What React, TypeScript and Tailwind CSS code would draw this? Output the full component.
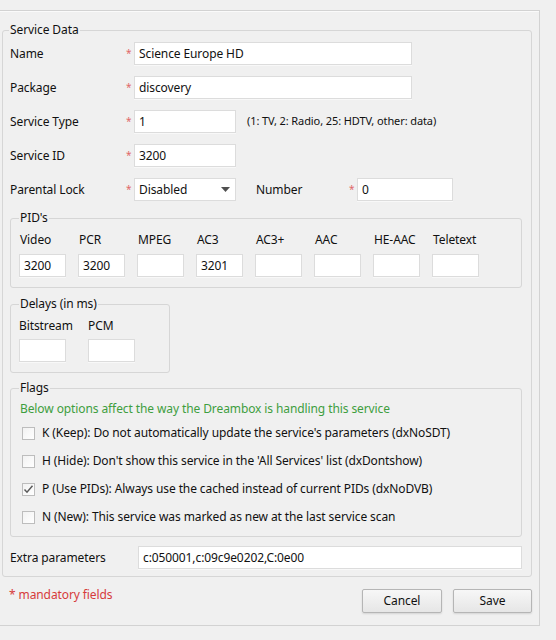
import React from 'react';

// Service editor dialog: service data, PIDs, delays, flags and extra parameters
const pidColumns = [
    { label: 'Video', value: '3200' },
    { label: 'PCR', value: '3200' },
    { label: 'MPEG', value: '' },
    { label: 'AC3', value: '3201' },
    { label: 'AC3+', value: '' },
    { label: 'AAC', value: '' },
    { label: 'HE-AAC', value: '' },
    { label: 'Teletext', value: '' },
];

const flags = [
    { text: "K (Keep): Do not automatically update the service's parameters (dxNoSDT)", checked: false },
    { text: "H (Hide): Don't show this service in the 'All Services' list (dxDontshow)", checked: false },
    { text: 'P (Use PIDs): Always use the cached instead of current PIDs (dxNoDVB)', checked: true },
    { text: 'N (New): This service was marked as new at the last service scan', checked: false },
];

function TextBox({ value = '', className = '' }: { value?: string; className?: string }) {
    return (
        <div
            className={`h-[23px] bg-white border border-[#dcdcdc] shadow-[0_1px_0_#f8f8f8] flex items-center pl-[4px] text-[12px] text-[#111] ${className}`}
        >
            {value}
        </div>
    );
}

function Required() {
    return <span className="w-[8px] shrink-0 text-[10px] text-[#e06868] leading-none -mt-[2px]">*</span>;
}

function GroupBox({
    title,
    className = '',
    children,
}: {
    title: string;
    className?: string;
    children: React.ReactNode;
}) {
    return (
        <fieldset className={`border border-[#d6d6d6] rounded-[3px] p-0 min-w-0 ${className}`}>
            <legend className="ml-[8px] px-[1px] text-[12px] leading-[16px]">{title}</legend>
            {children}
        </fieldset>
    );
}

function Checkbox({ checked }: { checked: boolean }) {
    return (
        <div className="w-[13px] h-[13px] shrink-0 border border-[#bdbdbd] bg-gradient-to-br from-[#f2f2f2] to-white flex items-center justify-center">
            {checked && (
                <svg width="11" height="11" viewBox="0 0 11 11">
                    <path d="M1.5 5.5 L4 8.2 L9.5 1.8" fill="none" stroke="#5a5a5a" strokeWidth="1.5" />
                </svg>
            )}
        </div>
    );
}

export default function App() {
    return (
        <div className="w-[556px] h-[640px] bg-[#f0f0f0] pt-[10px] overflow-hidden font-['Noto_Sans',sans-serif] text-[12px] tracking-[-0.1px] text-[#111]">
            <div className="w-[540px] h-[616px] border-t border-r border-b border-[#d2d2d2] shadow-[inset_0_1px_0_#fafafa] pl-[2px] pt-[11px]">
                {/* Service Data */}
                <fieldset className="w-[530px] border border-[#d6d6d6] rounded-[3px] p-0 min-w-0">
                    <legend className="ml-[6px] px-[1px] text-[12px] leading-[16px]">Service Data</legend>
                    <div className="pt-[4px] pl-[7px] pr-[8px] pb-[7px]">
                        <div className="flex flex-col gap-[11px]">
                            <div className="flex items-center h-[23px]">
                                <span className="w-[116px]">Name</span>
                                <Required />
                                <TextBox value="Science Europe HD" className="w-[278px]" />
                            </div>
                            <div className="flex items-center h-[23px]">
                                <span className="w-[116px]">Package</span>
                                <Required />
                                <TextBox value="discovery" className="w-[278px]" />
                            </div>
                            <div className="flex items-center h-[23px]">
                                <span className="w-[116px]">Service Type</span>
                                <Required />
                                <TextBox value="1" className="w-[102px]" />
                                <span className="ml-[11px] text-[11px]">(1: TV, 2: Radio, 25: HDTV, other: data)</span>
                            </div>
                            <div className="flex items-center h-[23px]">
                                <span className="w-[116px]">Service ID</span>
                                <Required />
                                <TextBox value="3200" className="w-[102px]" />
                            </div>
                            <div className="flex items-center h-[23px]">
                                <span className="w-[116px]">Parental Lock</span>
                                <Required />
                                <div className="w-[102px] h-[23px] bg-white border border-[#dcdcdc] flex items-center justify-between pl-[4px] pr-[5px]">
                                    <span>Disabled</span>
                                    <svg width="9" height="5" viewBox="0 0 9 5">
                                        <path d="M0 0 L9 0 L4.5 5 Z" fill="#505050" />
                                    </svg>
                                </div>
                                <span className="ml-[20px] w-[93px]">Number</span>
                                <Required />
                                <TextBox value="0" className="w-[96px]" />
                            </div>
                        </div>

                        {/* PID's */}
                        <GroupBox title="PID's" className="mt-[9px] w-[512px]">
                            <div className="flex pl-[8px] pt-[6px] pb-[10px]">
                                {pidColumns.map((pid) => (
                                    <div key={pid.label} className="w-[59px] flex flex-col gap-[6px]">
                                        <span className="leading-[16px] pl-[1px]">{pid.label}</span>
                                        <TextBox value={pid.value} className="w-[47px]" />
                                    </div>
                                ))}
                            </div>
                        </GroupBox>

                        {/* Delays */}
                        <GroupBox title="Delays (in ms)" className="mt-[8px] w-[160px]">
                            <div className="flex pl-[8px] pt-[6px] pb-[10px]">
                                {['Bitstream', 'PCM'].map((label) => (
                                    <div key={label} className="w-[69px] flex flex-col gap-[5px]">
                                        <span className="leading-[16px]">{label}</span>
                                        <TextBox className="w-[47px]" />
                                    </div>
                                ))}
                            </div>
                        </GroupBox>

                        {/* Flags */}
                        <GroupBox title="Flags" className="mt-[7px] w-[512px]">
                            <div className="pl-[9px] pt-[5px] pb-[5px]">
                                <div className="leading-[16px] text-[#3e9e3e]">
                                    Below options affect the way the Dreambox is handling this service
                                </div>
                                <div className="mt-[2px] flex flex-col">
                                    {flags.map((flag) => (
                                        <div key={flag.text} className="h-[28px] flex items-center gap-[7px] pl-[2px]">
                                            <Checkbox checked={flag.checked} />
                                            <span>{flag.text}</span>
                                        </div>
                                    ))}
                                </div>
                            </div>
                        </GroupBox>

                        <div className="mt-[9px] flex items-center">
                            <span className="w-[128px]">Extra parameters</span>
                            <TextBox value="c:050001,c:09c9e0202,C:0e00" className="w-[384px]" />
                        </div>
                    </div>
                </fieldset>

                <div className="mt-[10px] flex justify-between items-start pl-[7px] pr-[7px]">
                    <span className="leading-[16px] text-[#d63b3b]">* mandatory fields</span>
                    <div className="mt-[2px] flex gap-[11px]">
                        <button className="w-[80px] h-[24px] border border-[#b5b5b5] rounded-[2px] bg-gradient-to-b from-[#f7f7f7] to-[#e6e6e6] shadow-[0_1px_2px_rgba(0,0,0,0.12)] text-[12px]">
                            Cancel
                        </button>
                        <button className="w-[79px] h-[24px] border border-[#b5b5b5] rounded-[2px] bg-gradient-to-b from-[#f7f7f7] to-[#e6e6e6] shadow-[0_1px_2px_rgba(0,0,0,0.12)] text-[12px]">
                            Save
                        </button>
                    </div>
                </div>
            </div>
        </div>
    );
}
